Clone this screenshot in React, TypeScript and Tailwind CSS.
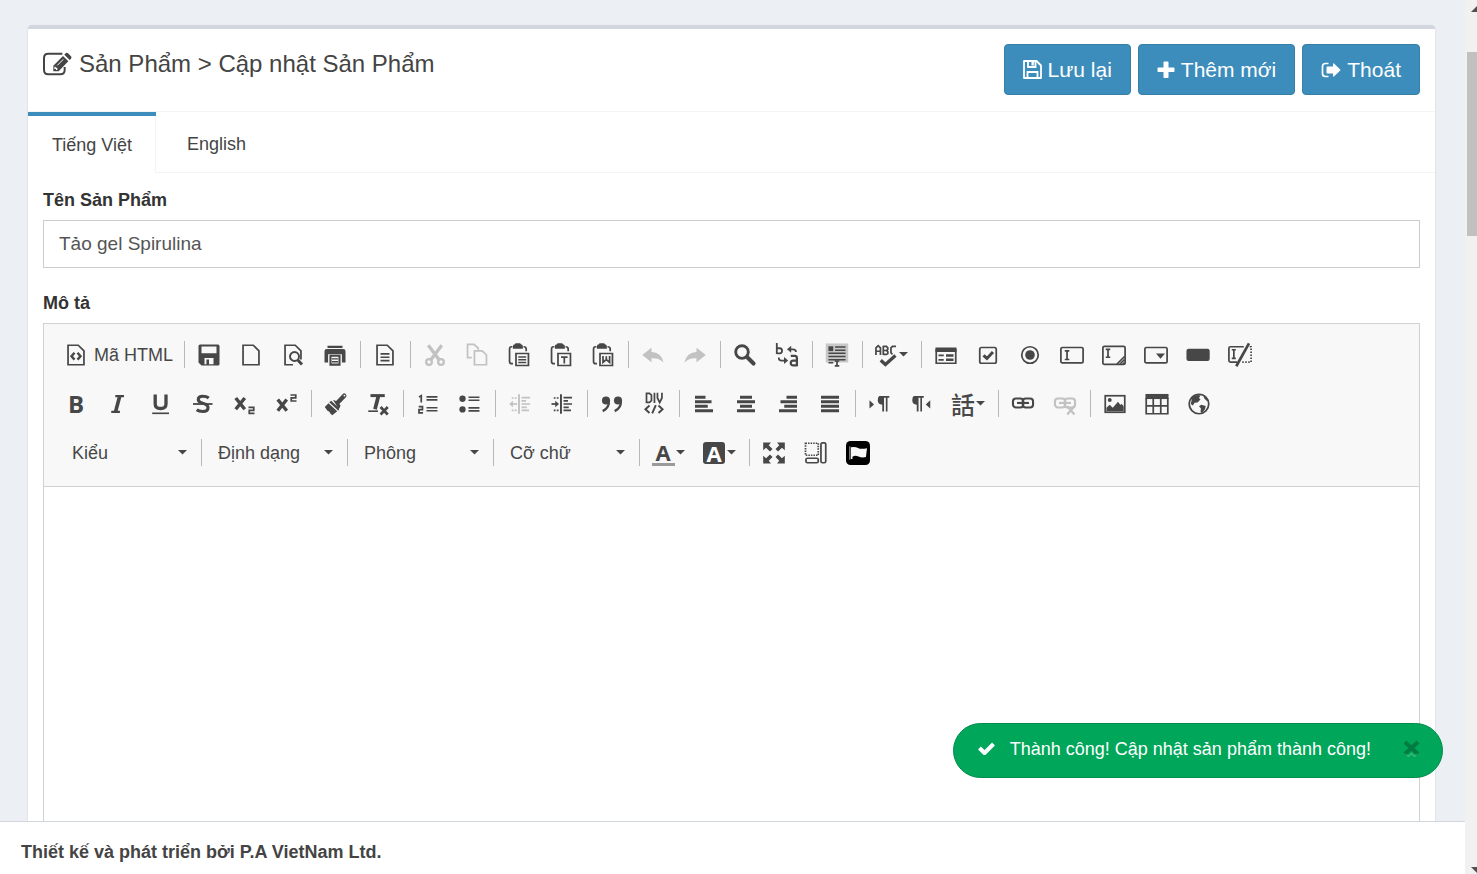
import clsx from "clsx";
import type { ReactNode } from "react";

type Tool = { label: string; icon: ReactNode; off?: boolean; menu?: boolean };

const Ico = ({ children }: { children: ReactNode }) => (
  <svg viewBox="0 0 16 16" className="size-6 shrink-0 overflow-visible" fill="none" stroke="currentColor" strokeWidth="1.150">
    {children}
  </svg>
);

const Letter = ({ className, children }: { className?: string; children: string }) => (
  <span className={clsx("flex h-8 w-6 shrink-0 items-center justify-center", className)}>{children}</span>
);

const Caret = () => (
  <svg viewBox="0 0 9 5" className="h-[5px] w-[9px] shrink-0" fill="currentColor">
    <path d="M0 0h9L4.500 4.600z" />
  </svg>
);

const page = <path d="M2.700 1.500H9.500L13.300 5.300V14.500H2.700Z" />;

const clipboard = (
  <>
    <path d="M3.600 2.500H3Q1.700 2.500 1.700 4V12.500Q1.700 13.800 3.200 13.800H4M11 2.500Q12.800 2.500 12.800 4V5.500" />
    <path d="M4.500 3.200V2.200Q4.500 1.400 5.500 1.400L6 .8H8.500L9 1.400Q10 1.400 10 2.200V3.200Z" fill="currentColor" />
    <path d="M6 7H14.300V15H6Z" />
  </>
);

const alignIcon = (d: string) => (
  <Ico>
    <path strokeWidth="1.900" d={d} />
  </Ico>
);

const documentTools: Tool[] = [
  {
    label: "Lưu",
    icon: (
      <Ico>
        <path
          d="M2 1H14Q15 1 15 2V14Q15 15 14 15H3L1 13V2Q1 1 2 1ZM3 2.300V6.800H13V2.300ZM5 10V14.200H11V10ZM6.300 11H8V14.200H6.300Z"
          fill="currentColor"
          fillRule="evenodd"
          stroke="none"
        />
      </Ico>
    ),
  },
  { label: "Trang mới", icon: <Ico>{page}</Ico> },
  {
    label: "Xem trước",
    icon: (
      <Ico>
        <path d="M8 14.500H2.700V1.500H9.500L13.300 5.300V11" />
        <circle cx="9" cy="9" r="3" strokeWidth="1.300" />
        <path d="M11 11.200L14 14.300" strokeWidth="2" />
      </Ico>
    ),
  },
  {
    label: "In",
    icon: (
      <Ico>
        <path d="M3 3.300V1.900H13V3.300ZM1 13V5.500Q1 4 2.500 4H13.500Q15 4 15 5.500V13H12.600V7.500H3.400V13Z" fill="currentColor" stroke="none" />
        <path d="M5 8.500H11V14.400H5Z" strokeWidth="1.400" />
        <path d="M6 10.600H10M6 12.500H10" strokeWidth=".9" />
      </Ico>
    ),
  },
];

const templateTools: Tool[] = [
  {
    label: "Mẫu dựng sẵn",
    icon: (
      <Ico>
        {page}
        <path d="M5 7.200H11M5 9.500H11M5 11.700H11" />
      </Ico>
    ),
  },
];

const clipboardTools: Tool[] = [
  {
    label: "Cắt",
    off: true,
    icon: (
      <Ico>
        <path d="M3.500 1.500L11 11.500M12.500 1.500L5 11.500" strokeWidth="2.200" />
        <circle cx="4" cy="12.700" r="1.900" strokeWidth="1.500" />
        <circle cx="12" cy="12.700" r="1.900" strokeWidth="1.500" />
      </Ico>
    ),
  },
  {
    label: "Sao chép",
    off: true,
    icon: (
      <Ico>
        <path d="M4.500 9.800H1.700V.9H6L8.800 3.500V4.500" />
        <path d="M6.300 5.300H11.500L14.300 8V14.500H6.300Z" />
      </Ico>
    ),
  },
  {
    label: "Dán",
    icon: (
      <Ico>
        {clipboard}
        <path d="M7.500 9.300H12.800M7.500 11.200H12.800M7.500 13H12.800" strokeWidth="1" />
      </Ico>
    ),
  },
  {
    label: "Dán theo định dạng văn bản thuần",
    icon: (
      <Ico>
        {clipboard}
        <path d="M8 9.400H12.400M10.200 9.400V13.700" />
      </Ico>
    ),
  },
  {
    label: "Dán với định dạng Word",
    icon: (
      <Ico>
        {clipboard}
        <path d="M8 8.700V12.900L10.200 11L12.400 12.900V8.700M10.200 8.800V11" />
      </Ico>
    ),
  },
];

const undoPath = "M.8 8L7 3.200V6Q13.500 6 15 13Q12 9.800 7 10.200V12.800Z";

const undoTools: Tool[] = [
  {
    label: "Khôi phục thao tác",
    off: true,
    icon: (
      <Ico>
        <path d={undoPath} fill="currentColor" stroke="none" />
      </Ico>
    ),
  },
  {
    label: "Làm lại thao tác",
    off: true,
    icon: (
      <Ico>
        <path d={undoPath} transform="translate(16 0) scale(-1 1)" fill="currentColor" stroke="none" />
      </Ico>
    ),
  },
];

const findTools: Tool[] = [
  {
    label: "Tìm kiếm",
    icon: (
      <Ico>
        <circle cx="6" cy="6" r="4.200" strokeWidth="1.900" />
        <path d="M9.500 9.500L13.700 13.700" strokeWidth="2.700" strokeLinecap="round" />
      </Ico>
    ),
  },
  {
    label: "Thay thế",
    icon: (
      <Ico>
        <path d="M1.200 0V7.300M1.200 3.500H3.200Q4.700 3.500 4.700 5.200T3.200 6.900H1.200" strokeWidth="1.200" />
        <path d="M10.500 8.500H13.200Q14.600 8.500 14.600 10V15.500M14.600 11.700H12.200Q10.500 11.700 10.500 13.300T12.200 14.900H14.600" strokeWidth="1.500" />
        <path d="M14 6Q14 4.200 12 4.200H10M2.500 9.700Q2.500 11.700 4 11.700H6" />
        <path d="M8 4.200L10.800 1.900V6.500ZM8.800 11.700L6 9.400V14Z" fill="currentColor" stroke="none" />
      </Ico>
    ),
  },
];

const selectAllTools: Tool[] = [
  {
    label: "Chọn tất cả",
    icon: (
      <Ico>
        <path d="M.5 .3H15.500V13H.5Z" fill="#c8c8c8" stroke="none" />
        <path d="M2.300 2.200H5.500V5.400H2.300Z" fill="currentColor" stroke="none" />
        <path d="M6.700 2.700H13.700M6.700 4.800H13.700M2.300 6.900H13.700M2.300 9H13.700M2.300 11.200H13.700M2.300 13.200H5.500" strokeWidth="1" />
        <path d="M6.500 12H9.500M6.500 15.300H9.500M8 12V15.300" />
      </Ico>
    ),
  },
];

const spellTools: Tool[] = [
  {
    label: "Kiểm tra chính tả",
    menu: true,
    icon: (
      <Ico>
        <path d="M1.300 8V3.200L2.800 1.800L4.300 3.200V8M1.300 5.500H4.300M6.200 1.800V8M6.200 2.200H8.300L9.200 3.200V4.300L8.300 5H6.200M8.300 5L9.200 5.700V7L8.300 7.600H6.200M14.700 2.200H12.300L11.300 3.300V6.500L12.300 7.600" />
        <path d="M4.500 11.500L7.600 14.300L14.300 8.300" strokeWidth="2.200" />
      </Ico>
    ),
  },
];

const formTools: Tool[] = [
  {
    label: "Biểu mẫu",
    icon: (
      <Ico>
        <path d="M1.500 4V13.500H14.500V4" />
        <path d="M1 3H15V6H1Z" fill="currentColor" stroke="none" />
        <path d="M3 8.300H6.500M3 11.200H6.500" />
        <path d="M8 8.300H13M8 11.200H13" strokeWidth="1.700" />
      </Ico>
    ),
  },
  {
    label: "Nút kiểm",
    icon: (
      <Ico>
        <rect x="2.500" y="3" width="11" height="10.500" rx="1.200" />
        <path d="M5 8.200L7.300 10.300L11.300 6" strokeWidth="2" />
      </Ico>
    ),
  },
  {
    label: "Nút chọn",
    icon: (
      <Ico>
        <circle cx="8" cy="8" r="5.500" />
        <circle cx="8" cy="8" r="3.200" fill="currentColor" stroke="none" />
      </Ico>
    ),
  },
  {
    label: "Trường văn bản",
    icon: (
      <Ico>
        <rect x=".6" y="3" width="14.800" height="10.300" rx="1" />
        <path d="M3.200 5.300H6.200M3.200 11H6.200M4.700 5.300V11" />
      </Ico>
    ),
  },
  {
    label: "Vùng văn bản",
    icon: (
      <Ico>
        <rect x=".6" y="2.300" width="14.800" height="12" rx="1" />
        <path d="M2.500 4.300H5.500M2.500 9.500H5.500M4 4.300V9.500" />
        <path d="M10 14L15 9M12 14L15 11M14 14L15 13" />
      </Ico>
    ),
  },
  {
    label: "Ô chọn",
    icon: (
      <Ico>
        <rect x=".6" y="3" width="14.800" height="10.300" rx="1" />
        <path d="M8 7H14L11 10.500Z" fill="currentColor" stroke="none" />
      </Ico>
    ),
  },
  {
    label: "Nút",
    icon: (
      <Ico>
        <rect x=".3" y="3.800" width="15.500" height="8.200" rx="1.500" fill="currentColor" stroke="none" />
      </Ico>
    ),
  },
  {
    label: "Trường ẩn",
    icon: (
      <Ico>
        <path d="M10.500 2.500H1.700Q.6 2.500 .6 3.500V11.700Q.6 12.700 1.700 12.700H6" />
        <path d="M2.500 4.500H5.200M2.500 10.200H5.200M3.900 4.500V10.200" />
        <path d="M14 .3L5.500 15.500" strokeWidth="1.800" />
        <path d="M14.500 2.500H15.400V12.700H9" strokeDasharray="1 1" />
      </Ico>
    ),
  },
];

const basicStyles: Tool[] = [
  { label: "Đậm", icon: <Letter className="font-['Open_Sans','Noto_Sans',sans-serif] text-2xl font-bold">B</Letter> },
  {
    label: "Nghiêng",
    icon: (
      <Ico>
        <path d="M6.200 2.700H12M3.500 13.300H9.300" strokeWidth="1.500" />
        <path d="M9.200 2.500L6.300 13.500" strokeWidth="2.400" />
      </Ico>
    ),
  },
  {
    label: "Gạch chân",
    icon: (
      <Ico>
        <path d="M4.800 1.700V8Q4.800 11 8.400 11T12 8V1.700" strokeWidth="2.200" />
        <path d="M2.800 14.200H14" strokeWidth="1.100" />
      </Ico>
    ),
  },
  {
    label: "Gạch xuyên ngang",
    icon: (
      <Ico>
        <path d="M12.500 4Q11 2.800 8.500 2.800Q5.500 2.800 5.500 5Q5.500 6.700 8.500 7.500Q12 8.300 12 10.500Q12 13 8.500 13Q6 13 4.500 11.800" strokeWidth="2.100" />
        <path d="M2 8H15" strokeWidth="1.200" />
      </Ico>
    ),
  },
  {
    label: "Chỉ số dưới",
    icon: (
      <Ico>
        <path d="M2.500 4L8.500 11.500M8.500 4L2.500 11.500" strokeWidth="2.300" />
        <path d="M11 10.300H14.500V12.200H11.500V14.300H15" />
      </Ico>
    ),
  },
  {
    label: "Chỉ số trên",
    icon: (
      <Ico>
        <path d="M2.500 5L8.500 12.500M8.500 5L2.500 12.500" strokeWidth="2.300" />
        <path d="M11 2H14.500V3.900H11.500V6H15" />
      </Ico>
    ),
  },
];

const cleanupTools: Tool[] = [
  {
    label: "Sao chép định dạng",
    icon: (
      <Ico>
        <path d="M13.500 2.500L9.300 6.800" strokeWidth="3" strokeLinecap="round" />
        <path d="M6 5.200L8 6L11 8.800L10.500 10.500L9.500 11Z" fill="currentColor" stroke="none" />
        <path d="M4.800 5.800L10.200 11L9.600 12.500L3.500 6.900Z" fill="currentColor" stroke="none" />
        <path d="M3 7.500L8.800 12.900L5.500 15.500L4.200 14.300L3.600 13.100L2.300 12.500L.5 10Z" fill="currentColor" stroke="none" />
        <circle cx="13.600" cy="2.400" r=".6" fill="#f8f8f8" stroke="none" />
      </Ico>
    ),
  },
  {
    label: "Xoá định dạng",
    icon: (
      <Ico>
        <path d="M3 2.400H12.500" strokeWidth="2" />
        <path d="M8.300 2.500L6 11.500" strokeWidth="2.500" />
        <path d="M1.500 12.800H8" strokeWidth="1.100" />
        <path d="M9.700 10L14.500 15M14.500 10L9.700 15" strokeWidth="1.800" />
      </Ico>
    ),
  },
];

const listTools: Tool[] = [
  {
    label: "Chèn/Xoá Danh sách có thứ tự",
    icon: (
      <Ico>
        <path d="M2 3.300L3.500 2.500V7M1.800 9.800H4.300V11.700H2V13.900H4.700" />
        <path d="M7 3.300H14.300M7 5.300H14.300M7 10.500H14.300M7 12.500H14.300" />
      </Ico>
    ),
  },
  {
    label: "Chèn/Xoá Danh sách không thứ tự",
    icon: (
      <Ico>
        <circle cx="3" cy="4.500" r="2.100" fill="currentColor" stroke="none" />
        <circle cx="3" cy="11.600" r="2.100" fill="currentColor" stroke="none" />
        <path d="M7 3.500H14.300M7 5.500H14.300M7 10.600H14.300M7 12.600H14.300" />
      </Ico>
    ),
  },
];

const indentLines = (
  <>
    <path d="M7.300 1.500V14.500" strokeWidth="1.300" />
    <path d="M9 3.700H14.700M9 5.900H12M9 8H14.700M9 10.200H12.500M9 12.300H14" />
    <path d="M2.500 4H6M2.500 12.300H6" strokeDasharray="1.200 .8" />
  </>
);

const indentTools: Tool[] = [
  {
    label: "Dịch ra ngoài",
    off: true,
    icon: (
      <Ico>
        {indentLines}
        <path d="M2 8H6" />
        <path d="M.8 8L3.300 5.800V10.200Z" fill="currentColor" stroke="none" />
      </Ico>
    ),
  },
  {
    label: "Dịch vào trong",
    icon: (
      <Ico>
        {indentLines}
        <path d="M1 8H5" />
        <path d="M6 8L3.500 5.800V10.200Z" fill="currentColor" stroke="none" />
      </Ico>
    ),
  },
];

const blockTools: Tool[] = [
  {
    label: "Khối trích dẫn",
    icon: (
      <Ico>
        <circle cx="4" cy="5.700" r="2.700" fill="currentColor" stroke="none" />
        <circle cx="12" cy="5.700" r="2.700" fill="currentColor" stroke="none" />
        <path d="M5.800 5.500Q6.500 10.500 1.800 12.700M13.800 5.500Q14.500 10.500 9.800 12.700" strokeWidth="1.600" />
      </Ico>
    ),
  },
  {
    label: "Tạo khối các thành phần",
    icon: (
      <Ico>
        <path d="M3 .9V6.900H5L6.300 5.700V2.100L5 .9ZM8.300 .5V7.300M10.300 .5V4L11.800 7L13.300 4V.5" />
        <path d="M5 9L2.300 11.500L5 14M11 9L13.700 11.500L11 14M9.200 8.700L6.800 14.300" strokeWidth="1.300" />
      </Ico>
    ),
  },
];

const alignTools: Tool[] = [
  { label: "Canh trái", icon: alignIcon("M2 3.500H9M2 6.500H13M2 9.500H10.500M2 12.500H14") },
  { label: "Canh giữa", icon: alignIcon("M4 3.500H12M2 6.500H14M4 9.500H12M2 12.500H14") },
  { label: "Canh phải", icon: alignIcon("M7 3.500H14M3 6.500H14M5.500 9.500H14M2 12.500H14") },
  { label: "Canh đều", icon: alignIcon("M2 3.500H14M2 6.500H14M2 9.500H14M2 12.500H14") },
];

const pilcrow = "M7.500 2.700H14.200V3.800H13V13H11.900V3.800H10.700V13H9.500V8.500Q6.500 8.300 6.500 5.500Q6.500 3.200 7.500 2.700Z";

const bidiTools: Tool[] = [
  {
    label: "Văn bản hướng từ trái sang phải",
    icon: (
      <Ico>
        <path d={pilcrow} fill="currentColor" stroke="none" />
        <path d="M1 5.500L4 8.300L1 11Z" fill="currentColor" stroke="none" />
      </Ico>
    ),
  },
  {
    label: "Văn bản hướng từ phải sang trái",
    icon: (
      <Ico>
        <path d={pilcrow} transform="translate(-5 0)" fill="currentColor" stroke="none" />
        <path d="M13.500 5.500L10.500 8.300L13.500 11Z" fill="currentColor" stroke="none" />
      </Ico>
    ),
  },
  {
    label: "Đặt ngôn ngữ",
    menu: true,
    icon: <Letter className="font-['Noto_Sans_CJK_TC',sans-serif] text-2xl leading-none font-medium">話</Letter>,
  },
];

const chain = (
  <>
    <rect x="1.300" y="4.300" width="6.900" height="6" rx="2" strokeWidth="1.400" />
    <rect x="7.800" y="4.300" width="6.900" height="6" rx="2" strokeWidth="1.400" />
    <path d="M4 7.300H12" strokeWidth="1.400" />
  </>
);

const linkTools: Tool[] = [
  { label: "Chèn/Sửa liên kết", icon: <Ico>{chain}</Ico> },
  {
    label: "Xoá liên kết",
    off: true,
    icon: (
      <Ico>
        {chain}
        <path d="M9.500 9.500L14.300 15M14.300 9.500L9.500 15" strokeWidth="1.500" />
      </Ico>
    ),
  },
];

const insertTools: Tool[] = [
  {
    label: "Hình ảnh",
    icon: (
      <Ico>
        <rect x="1.500" y="2.500" width="13" height="11" />
        <path d="M2.300 12.800V10.500L4.500 8.500L6.500 10.500L10 6.500L11.500 8.500L12.500 8L13.800 9.500V12.800Z" fill="currentColor" stroke="none" />
        <circle cx="4.500" cy="5.300" r="1.300" fill="currentColor" stroke="none" />
      </Ico>
    ),
  },
  {
    label: "Bảng",
    icon: (
      <Ico>
        <path d="M.3 1.300H15.700V4.700H.3Z" fill="currentColor" stroke="none" />
        <path d="M.8 4V14.500H15.200V4M5.500 4V14.500M10.500 4V14.500M.8 9.300H15.200" />
      </Ico>
    ),
  },
  {
    label: "Chèn Iframe",
    icon: (
      <Ico>
        <circle cx="8" cy="8" r="6.500" />
        <path d="M3.500 3.500Q6 1.500 9 2.300L8 4L9 5L7 7L5 7.200L4 9L2.500 8ZM9.500 8.500L12.500 9.300L12 11.500L10 14L9 13L9.300 11L8 9.500Z" fill="currentColor" stroke="none" />
        <path d="M11.500 3.500L14 6" />
      </Ico>
    ),
  },
];

const colorTools: Tool[] = [
  {
    label: "Màu chữ",
    menu: true,
    icon: (
      <span className="flex w-6 flex-col items-center pt-0.5">
        <span className="font-['Open_Sans','Noto_Sans',sans-serif] text-[22px] leading-5 font-bold">A</span>
        <span className="mt-px h-[3px] w-[23px] bg-[#9a9a9a]" />
      </span>
    ),
  },
  {
    label: "Màu nền",
    menu: true,
    icon: (
      <span className="mx-px flex size-[22px] items-center justify-center rounded-[3px] bg-[#474747] font-['Open_Sans','Noto_Sans',sans-serif] text-[22px] leading-none font-bold text-white">
        A
      </span>
    ),
  },
];

const viewTools: Tool[] = [
  {
    label: "Phóng to tối đa",
    icon: (
      <Ico>
        <path d="M.8 1H6L4.500 2.800L7 5.300L5.300 7L2.700 4.500L.8 6.200ZM15.200 1V6.200L13.300 4.500L10.700 7L9 5.300L11.500 2.800L10 1ZM.8 15V9.800L2.700 11.500L5.300 9L7 10.700L4.500 13.200L6 15ZM15.200 15H10L11.500 13.200L9 10.700L10.700 9L13.300 11.500L15.200 9.800Z" fill="currentColor" stroke="none" />
      </Ico>
    ),
  },
  {
    label: "Hiển thị các khối",
    icon: (
      <Ico>
        <path d="M1 1.500H9.500V9.500H1Z" strokeDasharray="1 .7" />
        <rect x="11.300" y="1.200" width="3.200" height="13.300" rx="1" />
        <rect x="1.300" y="11.500" width="8.200" height="3" rx="1" />
      </Ico>
    ),
  },
  {
    label: "Trình quản lý tệp",
    icon: (
      <Ico>
        <rect x="0" y="0" width="16" height="16" rx="3" fill="#000" stroke="none" />
        <path d="M3.200 4.200Q6 3.500 8 4.600T14 4.800L13.300 10.700Q10.500 11.300 8.300 10.300T4.300 10.500V12H3.200Z" fill="#f8f8f8" stroke="none" />
        <path d="M2.500 3.500V12.500" stroke="#888" strokeWidth=".8" />
      </Ico>
    ),
  },
];

const ROW_ONE = [documentTools, templateTools, clipboardTools, undoTools, findTools, selectAllTools, spellTools, formTools];
const ROW_TWO = [basicStyles, cleanupTools, listTools, indentTools, blockTools, alignTools, bidiTools, linkTools, insertTools];
const COMBOS = ["Kiểu", "Định dạng", "Phông", "Cỡ chữ"];

const Separator = () => <span className="mr-[3px] ml-1 h-[27px] w-px shrink-0 bg-[#b8b8b8]" />;

const ToolButton = ({ label, icon, off, menu }: Tool) => (
  <button
    type="button"
    aria-label={label}
    disabled={off}
    className={clsx(
      "flex h-9 shrink-0 items-center",
      menu ? "w-[51px] gap-px pl-2" : "w-[42px] justify-center",
      off && "opacity-30",
    )}
  >
    {icon}
    {menu && <Caret />}
  </button>
);

const Groups = ({ groups }: { groups: Tool[][] }) =>
  groups.map((tools, i) => (
    <div key={tools[0].label} role="group" className="flex items-center">
      {i > 0 && <Separator />}
      {tools.map((tool) => (
        <ToolButton key={tool.label} {...tool} />
      ))}
    </div>
  ));

const Toolbar = () => (
  <div role="toolbar" aria-label="Thanh công cụ" className="border-b border-[#d1d1d1] bg-[#f8f8f8] pt-1.5 pb-[9px] pl-[11px] text-[#474747]">
    <div className="flex min-h-[49px] flex-wrap items-center">
      <button type="button" className="flex h-9 w-[125px] items-center gap-1.5 pl-[9px] text-lg whitespace-nowrap">
        <Ico>
          {page}
          <path d="M7 6.500L5 8.800L7 11.100M9 6.500L11 8.800L9 11.100" strokeWidth="1.600" />
        </Ico>
        Mã HTML
      </button>
      <Separator />
      <Groups groups={ROW_ONE} />
    </div>
    <div className="flex min-h-[49px] flex-wrap items-center">
      <Groups groups={ROW_TWO} />
    </div>
    <div className="flex min-h-[49px] flex-wrap items-center pl-1">
      {COMBOS.map((name) => (
        <div key={name} className="flex items-center">
          <div className="grid w-[138px] items-center">
            <select aria-label={name} className="col-start-1 row-start-1 h-9 appearance-none bg-transparent pr-6 pl-[13px] text-lg">
              <option>{name}</option>
            </select>
            <span className="pointer-events-none col-start-1 row-start-1 mr-2.5 justify-self-end">
              <Caret />
            </span>
          </div>
          <Separator />
        </div>
      ))}
      <Groups groups={[colorTools, viewTools]} />
    </div>
  </div>
);

const EditIcon = () => (
  <svg viewBox="0 0 87 70" className="h-6 w-[29px] shrink-0" fill="none" stroke="currentColor" strokeWidth="6">
    <path d="M58 4H16Q3 4 3 17V53Q3 66 16 66H52Q65 66 65 53V44" />
    <path d="M31 40L60 11L76 27L47 57H31Z" fill="currentColor" stroke="none" />
    <path d="M64 7L68 3Q71 0 75 3L84 12Q87 15 84 19L80 23Z" fill="currentColor" stroke="none" />
    <path d="M36 43V48H41V53" stroke="#fff" strokeWidth="4" />
    <path d="M43 39L61 21" stroke="#fff" strokeWidth="3" />
  </svg>
);

const FloppyIcon = () => (
  <svg viewBox="0 0 19 19" className="size-[19px] shrink-0" fill="none" stroke="currentColor" strokeWidth="1.800">
    <path d="M1 1H13.500L18 5.500V18H1Z" strokeLinejoin="round" />
    <path d="M5 1V7H12.500V1M4.500 18V12H14.500V18" />
    <path d="M9.700 1.500V5.500" strokeWidth="2.400" />
  </svg>
);

const PlusIcon = () => (
  <svg viewBox="0 0 18 18" className="size-[18px] shrink-0" fill="currentColor">
    <path d="M7.300 .5H10.700Q11.500 .5 11.500 1.300V6.500H16.700Q17.500 6.500 17.500 7.300V10.200Q17.500 11 16.700 11H11.500V16.200Q11.500 17 10.700 17H7.300Q6.500 17 6.500 16.200V11H1.300Q.5 11 .5 10.200V7.300Q.5 6.500 1.300 6.500H6.500V1.300Q6.500 .5 7.300 .5Z" />
  </svg>
);

const SignOutIcon = () => (
  <svg viewBox="0 0 20 16" className="h-4 w-5 shrink-0" fill="none" stroke="currentColor" strokeWidth="1.700">
    <path d="M7.500 1.500H4.500Q1.500 1.500 1.500 4.500V11.500Q1.500 14.500 4.500 14.500H7.500" />
    <path d="M6.200 4.500H12V1.800Q12.300 1 13 1.500L19.200 7.500Q19.600 8 19.200 8.500L13 14.500Q12.300 15 12 14.200V11.500H6.200Q5.500 11.500 5.500 10.800V5.200Q5.500 4.500 6.200 4.500Z" fill="currentColor" stroke="none" />
  </svg>
);

const ACTIONS = [
  { label: "Lưu lại", icon: <FloppyIcon /> },
  { label: "Thêm mới", icon: <PlusIcon /> },
  { label: "Thoát", icon: <SignOutIcon /> },
];

const Toast = () => (
  <div role="status" className="absolute right-[22px] bottom-24 flex h-[55px] items-center rounded-full border border-[#008d4c] bg-[#00a65a] pr-[22px] pb-1 pl-6 text-lg text-white">
    <svg viewBox="0 0 17 17" className="mr-[15px] size-[17px]" fill="none" stroke="currentColor" strokeWidth="4">
      <path d="M1.500 8L6.500 13L15.500 4" strokeLinejoin="round" />
    </svg>
    <span className="whitespace-nowrap">Thành công! Cập nhật sản phẩm thành công!</span>
    <button type="button" aria-label="Đóng" className="ml-8 text-black/25">
      <svg viewBox="0 0 17 17" className="size-[17px]" fill="none" strokeWidth="4">
        <path d="M2.500 13.500L5.500 16.500L8.500 13.500L11.500 16.500L14.500 13.500" stroke="#fff" strokeOpacity=".2" strokeWidth="1.500" />
        <path d="M2 2L15 14M15 2L2 14" stroke="currentColor" />
      </svg>
    </button>
  </div>
);

const Scrollbar = () => (
  <div aria-hidden="true" className="flex w-3 shrink-0 flex-col overflow-hidden bg-[#f1f1f1]">
    <svg viewBox="0 0 12 52" className="h-[52px] w-3 shrink-0" fill="#505050">
      <path d="M12 6V12H6Z" />
    </svg>
    <div className="ml-0.5 h-[184px] bg-[#c1c1c1]" />
    <svg viewBox="0 0 12 12" className="mt-auto size-3 shrink-0" fill="#505050">
      <path d="M6 5H12V11Z" />
    </svg>
  </div>
);

export default function App() {
  return (
    <div className="flex h-screen overflow-hidden bg-[#ecf0f5] font-['Liberation_Sans',Arial,sans-serif] text-[#444]">
      <div className="relative flex min-w-0 flex-1 flex-col">
        <main className="flex min-h-0 flex-1 flex-col overflow-hidden pt-[25px] pr-[30px] pl-7">
          <section className="flex flex-1 flex-col rounded-t border-t-4 border-[#d2d6de] bg-white shadow-[0_1px_2px_rgba(0,0,0,0.15)]">
            <header className="flex items-start justify-between border-b border-[#f4f4f4] px-[15px] pt-[15px] pb-4">
              <h1 className="flex h-10 items-center gap-[7px] text-2xl">
                <EditIcon />
                Sản Phẩm &gt; Cập nhật Sản Phẩm
              </h1>
              <div className="flex gap-[7px]">
                {ACTIONS.map(({ label, icon }) => (
                  <button
                    key={label}
                    type="button"
                    className="flex h-[51px] items-center gap-1.5 rounded border border-[#367fa9] bg-[#3c8dbc] px-[18px] text-[21px] whitespace-nowrap text-white"
                  >
                    {icon}
                    {label}
                  </button>
                ))}
              </div>
            </header>

            <nav className="flex gap-[7px] border-b border-[#f4f4f4] text-lg">
              <a href="#vi" className="-mb-px flex h-[61px] flex-col justify-center border-t-4 border-[#3c8dbc] bg-white">
                <span className="flex flex-1 items-center border-r border-[#f4f4f4] pr-[23px] pl-6">Tiếng Việt</span>
              </a>
              <a href="#en" className="-mb-px flex h-[61px] items-center border-t-4 border-b border-transparent border-b-[#f4f4f4] px-6">
                English
              </a>
            </nav>

            <div className="flex flex-1 flex-col px-[15px] pt-3.5">
              <label htmlFor="name" className="mb-[7px] text-lg leading-[26px] font-bold text-[#333]">
                Tên Sản Phẩm
              </label>
              <input
                id="name"
                defaultValue="Tảo gel Spirulina"
                className="mb-[22px] h-12 w-full border border-[#ccc] px-[15px] text-[19px] text-[#555] outline-none"
              />
              <label htmlFor="description" className="mb-[7px] text-lg leading-[26px] font-bold text-[#333]">
                Mô tả
              </label>
              <div className="flex flex-1 flex-col border border-b-0 border-[#d1d1d1]">
                <Toolbar />
                <textarea id="description" className="w-full flex-1 resize-none p-5 text-lg outline-none" />
              </div>
            </div>
          </section>
        </main>

        <footer className="flex h-[53px] shrink-0 items-center border-t border-[#d2d6de] bg-white px-[21px] pt-2 text-lg font-bold">
          Thiết kế và phát triển bởi P.A VietNam Ltd.
        </footer>
        <Toast />
      </div>
      <Scrollbar />
    </div>
  );
}
